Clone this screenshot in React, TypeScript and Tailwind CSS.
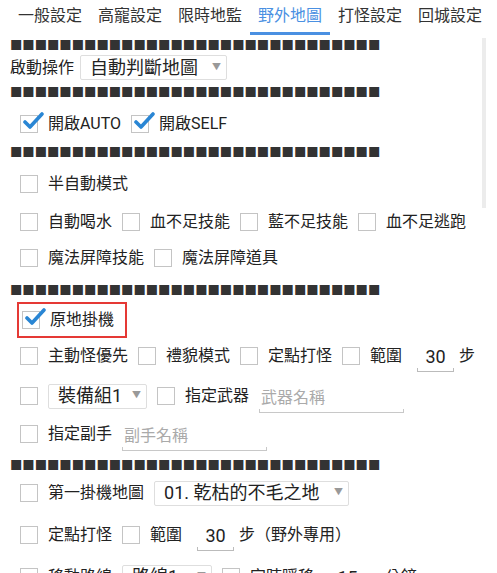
import React from 'react';

const tabs = ['一般設定', '高寵設定', '限時地監', '野外地圖', '打怪設定', '回城設定'];

const Sep: React.FC<{ h: string }> = ({ h }) => (
    <div className={`${h} flex items-center pl-[10px]`}>
        <span className="font-['Noto_Sans_CJK_TC',sans-serif] text-[12.35px] leading-none text-[#333] whitespace-nowrap">
            {'■'.repeat(30)}
        </span>
    </div>
);

const Box: React.FC<{ checked?: boolean }> = ({ checked }) => (
    <span className="relative inline-block w-[18px] h-[18px] border border-[#c4c4c4] bg-white shrink-0">
        {checked && (
            <svg className="absolute left-[1px] top-[-5px]" width="22" height="20" viewBox="0 0 22 20">
                <path d="M3 11 L8 16 L20 3" fill="none" stroke="#2a86d4" strokeWidth="3.6" strokeLinecap="round" strokeLinejoin="round" />
            </svg>
        )}
    </span>
);

const Check: React.FC<{ label: string; checked?: boolean; className?: string }> = ({ label, checked, className }) => (
    <label className={`flex items-center gap-[10px] mr-[10px] ${className ?? ''}`}>
        <Box checked={checked} />
        <span className="text-[16px] text-[#222] whitespace-nowrap">{label}</span>
    </label>
);

const Select: React.FC<{ value: string; w: string }> = ({ value, w }) => (
    <div className={`${w} h-[25px] flex items-center justify-between border border-[#dedede] rounded-[2px] pl-[9px] pr-[5px] bg-white`}>
        <span className="text-[18px] text-[#222] whitespace-nowrap leading-none">{value}</span>
        <span className="text-[9px] text-[#999]">▼</span>
    </div>
);

const Num: React.FC<{ value: string }> = ({ value }) => (
    <div className="flex flex-col w-[37px] ml-[5px] mr-[5px] mt-[6px]">
        <span className="text-[18px] text-[#222] text-center leading-[22px]">{value}</span>
        <span className="h-[4px] border-x border-b border-[#bbb]" />
    </div>
);

const TextField: React.FC<{ placeholder: string; w: string }> = ({ placeholder, w }) => (
    <div className={`flex flex-col ${w} mt-[8px]`}>
        <span className="text-[16px] text-[#aaa] pl-[2px] leading-[22px]">{placeholder}</span>
        <span className="h-[4px] border-x border-b border-[#c8c8c8]" />
    </div>
);

export default function App() {
    return (
        <div className="relative w-[497px] h-[573px] overflow-hidden bg-white font-['Roboto','Noto_Sans_CJK_TC',sans-serif] text-[#222]">
            <div className="h-[36px] flex pl-[10px]">
                {tabs.map((t, i) => (
                    <div
                        key={t}
                        className={`w-[80px] h-[35px] flex items-center justify-center text-[16px] ${
                            i === 3 ? 'text-[#4a90e2] border-b-[3px] border-[#4a90e2]' : 'text-[#333] border-b-[3px] border-transparent'
                        }`}
                    >
                        {t}
                    </div>
                ))}
            </div>
            <Sep h="h-[18px]" />
            <div className="h-[27px] flex items-center pl-[10px] gap-[6px]">
                <span className="text-[16px]">啟動操作</span>
                <Select value="自動判斷地圖" w="w-[147px]" />
            </div>
            <Sep h="h-[22px]" />
            <div className="h-[42px] flex items-center pl-[20px]">
                <Check label="開啟AUTO" checked />
                <Check label="開啟SELF" checked />
            </div>
            <Sep h="h-[14px]" />
            <div className="h-[50px] flex items-center pl-[20px]">
                <Check label="半自動模式" />
            </div>
            <div className="h-[26px] flex items-center pl-[20px]">
                <Check label="自動喝水" />
                <Check label="血不足技能" />
                <Check label="藍不足技能" />
                <Check label="血不足逃跑" />
            </div>
            <div className="h-[46px] flex items-center pl-[20px]">
                <Check label="魔法屏障技能" />
                <Check label="魔法屏障道具" />
            </div>
            <Sep h="h-[18px]" />
            <div className="h-[42px] flex items-center pl-[17px]">
                <div className="h-[36px] flex items-center pl-[3px] pr-[1px] border-2 border-[#e53935]">
                    <Check label="原地掛機" checked className="mr-0" />
                </div>
            </div>
            <div className="h-[30px] flex items-center pl-[20px]">
                <Check label="主動怪優先" />
                <Check label="禮貌模式" />
                <Check label="定點打怪" />
                <Check label="範圍" className="mr-0" />
                <Num value="30" />
                <span className="text-[16px]">步</span>
            </div>
            <div className="h-[50px] flex items-center pl-[20px]">
                <Box />
                <div className="ml-[10px] mr-[10px]">
                    <Select value="裝備組1" w="w-[99px]" />
                </div>
                <Check label="指定武器" className="mr-[8px]" />
                <TextField placeholder="武器名稱" w="w-[145px]" />
            </div>
            <div className="h-[26px] flex items-center pl-[20px]">
                <Check label="指定副手" className="mr-[8px]" />
                <TextField placeholder="副手名稱" w="w-[145px]" />
            </div>
            <Sep h="h-[36px]" />
            <div className="h-[20px] flex items-center pl-[20px]">
                <Check label="第一掛機地圖" className="mr-[4px]" />
                <Select value="01. 乾枯的不毛之地" w="w-[195px]" />
            </div>
            <div className="h-[64px] flex items-center pl-[20px]">
                <Check label="定點打怪" />
                <Check label="範圍" className="mr-0" />
                <Num value="30" />
                <span className="text-[16px]">步（野外專用）</span>
            </div>
            <div className="h-[20px] flex items-center pl-[20px]">
                <Check label="移動路線" className="mr-[4px]" />
                <Select value="路線1" w="w-[90px]" />
                <Check label="定時瞬移" className="ml-[10px]" />
                <Num value="15" />
                <span className="text-[16px] ml-[14px]">分鐘</span>
            </div>
            <div className="absolute left-[482px] top-[38px] w-[4px] h-[170px] bg-[#ececec]" />
        </div>
    );
}
